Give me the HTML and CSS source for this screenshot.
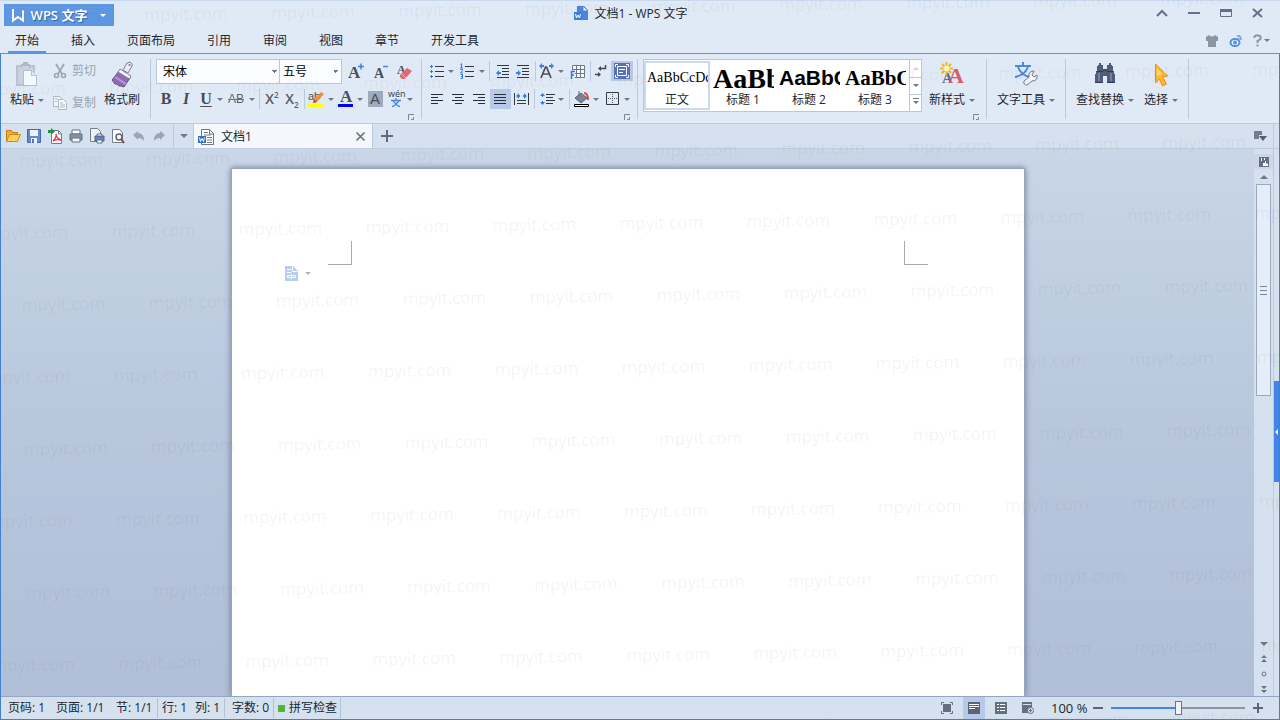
FILE: index.html
```html
<!DOCTYPE html>
<html lang="zh-CN">
<head>
<meta charset="utf-8">
<title>文档1 - WPS 文字</title>
<link rel="stylesheet" href="styles.css">
</head>
<body>
<div class="window">
  <header class="titlebar">
    <div class="title-left">
      <button class="app-button"><svg width="12" height="13" viewBox="0 0 12 13"><path d="M1 0v11.500l5-3.500 5 3.500V1.500" fill="none" stroke="#fff" stroke-width="2"/></svg><span>WPS 文字</span><i class="caret light"></i></button>
    </div>
    <div class="title">
      <svg width="15" height="15" viewBox="0 0 15 15"><path d="M3 0h7l4 4v10H3z" fill="#4a86dc"/><path d="M9 0v5h5z" fill="#fff" stroke="#4a86dc"/><path d="M0 6h8v8H0z" fill="#3f7ed8"/><path d="M1.500 8l1 4 1.500-3 1.500 3 1-4" fill="none" stroke="#fff"/></svg>
      <span>文档1 - WPS 文字</span>
    </div>
    <div class="title-right">
      <button aria-label="折叠功能区"><svg width="14" height="12" viewBox="0 0 14 12"><path d="M2 9l5-5 5 5" fill="none" stroke="#667085" stroke-width="2"/></svg></button>
      <button aria-label="最小化"><svg width="14" height="12" viewBox="0 0 14 12"><path d="M1 6h12" stroke="#667085" stroke-width="2"/></svg></button>
      <button aria-label="最大化"><svg width="14" height="12" viewBox="0 0 14 12"><path d="M1.500 2.500h11v7h-11z" fill="none" stroke="#667085"/><path d="M1 2h12v3H1z" fill="#667085"/></svg></button>
      <button aria-label="关闭"><svg width="14" height="12" viewBox="0 0 14 12"><path d="M2 2l9 8M11 2l-9 8" stroke="#667085" stroke-width="2"/></svg></button>
    </div>
  </header>
  <nav class="tabs">
    <button class="active">开始</button><button>插入</button><button>页面布局</button><button>引用</button><button>审阅</button><button>视图</button><button>章节</button><button>开发工具</button>
    <div class="tab-tools">
      <button aria-label="皮肤"><svg width="14" height="14" viewBox="0 0 14 14"><path d="M4 1q3 3 6 0l3 2v4h-2v6H3V7H1V3z" fill="#8a94a5"/></svg></button>
      <button aria-label="微博"><svg width="14" height="14" viewBox="0 0 14 14"><ellipse cx="6" cy="8.500" rx="4.500" ry="3.500" fill="#fff" stroke="#4f8fe0" stroke-width="2"/><circle cx="6" cy="8.500" r="2" fill="#4f8fe0"/><path d="M8 2q4-1 4 4M9 4q1 0 1 2" fill="none" stroke="#6aa2e8" stroke-width="1.500"/></svg></button>
      <button class="help" aria-label="帮助"><svg width="9" height="13" viewBox="0 0 9 13"><path d="M1.500 4V2.500l1.500-1h3l1.500 1V5l-3 2v2M4.500 10.500v2" fill="none" stroke="#8a94a5" stroke-width="2"/></svg><i class="caret"></i></button>
    </div>
  </nav>
  <div class="frame">
    <section class="ribbon">
      <div class="group clipboard">
        <button class="big paste"><svg width="24" height="26" viewBox="0 0 24 26"><path d="M1 3h19v21H1z" fill="#b9c3cf"/><path d="M3 5h15v17H3z" fill="#c9d3df"/><path d="M6 2h2V0h5v2h2v4H6z" fill="#aeb9c7"/><path d="M7 5h7" stroke="#e8eef5"/><path d="M8.500 8.500h8l5 5v10h-13z" fill="#f3f8fd" stroke="#b5c1cf"/><path d="M16.500 8.500v5h5" fill="#dfe9f3" stroke="#b5c1cf"/></svg><span>粘贴<i class="caret"></i></span></button>
        <div class="stack">
          <button class="muted"><svg width="14" height="16" viewBox="0 0 14 16"><path d="M3 1l6 10M11 1L5 11" stroke="#9ba5b1" stroke-width="1.700"/><circle cx="3.500" cy="12.500" r="2" fill="none" stroke="#9ba5b1" stroke-width="1.600"/><circle cx="10.500" cy="12.500" r="2" fill="none" stroke="#9ba5b1" stroke-width="1.600"/></svg><span>剪切</span></button>
          <button class="muted"><svg width="14" height="16" viewBox="0 0 14 16"><path d="M.500 1.500h6l2 2v8h-8z" fill="#f0f5fb" stroke="#aeb8c4"/><path d="M5.500 4.500h5l3 3v7h-8z" fill="#f5f9fd" stroke="#aeb8c4"/><path d="M2 4h3M2 6.500h2M7 8h3M7 10h5M7 12h5" stroke="#aeb8c4"/></svg><span>复制</span></button>
        </div>
        <button class="big brush"><svg width="24" height="26" viewBox="0 0 24 26"><path d="M9 9l11 7-6 9-3-1-2 0-2-2-2 0-3-4z" fill="#8f6bb6" stroke="#65508b"/><path d="M5 15l11 7" stroke="#b79bd2" stroke-width="2"/><path d="M10 7l11 7-1.500 3L8 10z" fill="#f6f3fb" stroke="#877aa5"/><path d="M13 8l4-7 3-1 2 2 0 2-4 7z" fill="#eeeaf5" stroke="#837b9a"/><circle cx="19.500" cy="3" r="1" fill="#756b91"/></svg><span>格式刷</span></button>
      </div>

      <div class="group font">
        <div class="row font-choice">
          <select class="font-name" aria-label="字体"><option>宋体</option></select><select class="font-size" aria-label="字号"><option>五号</option></select>
          <button aria-label="增大字号"><svg width="18" height="18" viewBox="0 0 18 18"><text x="1" y="15" class="glyph-a">A</text><path d="M11 3.500h6M14 .500v6" stroke="#3f82df" stroke-width="1.500"/></svg></button>
          <button aria-label="减小字号"><svg width="18" height="18" viewBox="0 0 18 18"><text x="2" y="15" class="glyph-small">A</text><path d="M11 3.500h5" stroke="#3f82df" stroke-width="1.500"/></svg></button>
          <button aria-label="清除格式"><svg width="16" height="18" viewBox="0 0 16 18"><text x="0" y="11" class="glyph-tiny">A</text><path d="M3 12l7-7 5 3-7 8H5l-2-2z" fill="#df6973"/><path d="M5 11l4 4" stroke="#f6b7bd"/></svg></button>
        </div>
        <div class="row format">
          <button class="serif"><b>B</b></button><button class="serif"><b><i>I</i></b></button><button class="serif underlined"><b>U</b></button><i class="caret"></i>
          <button class="strike">AB</button><i class="caret"></i><i class="sep"></i>
          <button class="script" aria-label="上标"><span>X<sup>2</sup></span></button><button class="script" aria-label="下标"><span>X<sub>2</sub></span></button><i class="sep"></i>
          <button aria-label="突出显示"><svg width="16" height="16" viewBox="0 0 16 16"><text x="0" y="9" class="glyph-ab">ab</text><path d="M5 12l1-4 7-7 3 2-7 8z" fill="#ed9132"/><path d="M5 12l1-4 3 3z" fill="#cf423f"/><path d="M0 13h15v3H0z" fill="#ff0"/></svg></button><i class="caret"></i>
          <button aria-label="字体颜色"><svg width="16" height="16" viewBox="0 0 16 16"><text x="2" y="11" class="glyph-a">A</text><path d="M0 13h15v3H0z" fill="#00f"/></svg></button><i class="caret"></i>
          <button class="shade">A</button>
          <button aria-label="拼音指南"><svg width="16" height="18" viewBox="0 0 16 18"><text x="0" y="7" class="pinyin">wén</text><path d="M3 10.500h10M8 8v2M5 11l5 5 2 .500M11 11l-5 5-2 .500" fill="none" stroke="#4386dc" stroke-width="1.300"/></svg></button><i class="caret"></i>
        </div>
        <button class="launcher" aria-label="字体设置"><svg width="6" height="6" viewBox="0 0 6 6"><path d="M.500 6V.500H6M3 5.500h2.500V3" fill="none" stroke="#7c8797"/></svg></button>
      </div>

      <div class="group paragraph">
        <div class="row para-top">
          <button aria-label="项目符号"><svg width="15" height="15" viewBox="0 0 15 15"><path d="M5 2.500h9M5 7.500h9M5 12.500h9" stroke="#33383f"/><path d="M0 2.500h3M1.500 1v3M0 7.500h3M1.500 6v3M0 12.500h3M1.500 11v3" stroke="#3478df"/></svg></button><i class="caret"></i>
          <button aria-label="编号"><svg width="15" height="17" viewBox="0 0 15 17"><path d="M5 3.500h9M5 8.500h9M5 13.500h9" stroke="#33383f"/><path d="M.500 1.500l1-1V5M0 5h3M.500 6.500h2v1l-2 2.500H3M.500 11.500h2v4h-2M1 13.500h1.500" fill="none" stroke="#3478df"/></svg></button><i class="caret"></i><i class="sep"></i>
          <button aria-label="减少缩进"><svg width="14" height="14" viewBox="0 0 14 14"><path d="M1 1.500h12M6 4.500h7M6 7.500h7M6 10.500h7M1 13.500h12" stroke="#33383f"/><path d="M0 9l3-3v2h2v2H3v2z" fill="#3d80df"/></svg></button><button aria-label="增加缩进"><svg width="14" height="14" viewBox="0 0 14 14"><path d="M1 1.500h12M6 4.500h7M6 7.500h7M6 10.500h7M1 13.500h12" stroke="#33383f"/><path d="M5 9L2 6v2H0v2h2v2z" fill="#3d80df"/></svg></button><i class="sep"></i>
          <button aria-label="中文版式"><svg width="16" height="16" viewBox="0 0 16 16"><path d="M2 15L6.500 4h1L12 15M4 11h6" fill="none" stroke="#4a4e55" stroke-width="1.700"/><path d="M0 3l3-3v2h2v2H3v2zM15 3l-3-3v2h-2v2h2v2z" fill="#3d80df"/></svg></button><i class="caret"></i>
          <button aria-label="插入表格"><svg width="15" height="15" viewBox="0 0 15 15"><path d="M2.500 1.500h12v12h-12zM2.500 5.500h12M2.500 9.500h12M6.500 1v12M10.500 1v12" fill="#f3f7fc" stroke="#6d7889"/><path d="M0 6h5v9H0z" fill="#e0eaf6"/><path d="M1.500 15V7.500H5M1 11h3" fill="none" stroke="#3478df" stroke-width="1.500"/></svg></button><i class="sep"></i>
          <button aria-label="段落标记"><svg width="12" height="14" viewBox="0 0 12 14"><path d="M10.500 1v3.500H5M0 10.500h5" fill="none" stroke="#454a52" stroke-width="1.500"/><path d="M3 4.500L6 2v5zM6 10.500L3 8v5z" fill="#454a52"/></svg></button>
          <button class="pressed" aria-label="显示段落布局"><svg width="16" height="16" viewBox="0 0 16 16"><path d="M0 0h16v16H0z" fill="#5871b6"/><path d="M3.500 3.500h9v9h-9zM1.500 4V1.500H4M12 1.500h2.500V4M14.500 12v2.500H12M4 14.500H1.500V12M5 6.500h6M5 9.500h4" fill="none" stroke="#fff"/></svg></button>
        </div>
        <div class="row para-bottom">
          <button aria-label="左对齐"><svg width="13" height="12" viewBox="0 0 13 12"><path d="M0 1.500h12M0 4.500h7M0 7.500h12M0 10.500h7" stroke="#282d33"/></svg></button><button aria-label="居中"><svg width="13" height="12" viewBox="0 0 13 12"><path d="M0 1.500h12M3 4.500h7M0 7.500h12M3 10.500h7" stroke="#282d33"/></svg></button><button aria-label="右对齐"><svg width="13" height="12" viewBox="0 0 13 12"><path d="M0 1.500h12M5 4.500h7M0 7.500h12M5 10.500h7" stroke="#282d33"/></svg></button><button class="pressed" aria-label="两端对齐"><svg width="13" height="12" viewBox="0 0 13 12"><path d="M0 1.500h12M0 4.500h12M0 7.500h12M0 10.500h12" stroke="#282d33"/></svg></button>
          <button aria-label="分散对齐"><svg width="15" height="12" viewBox="0 0 15 12"><path d="M.500 0v12M14.500 0v12M3 7.500h9M3 10.500h9" stroke="#33383f"/><path d="M2 3l3-3v2h1v2H5v2zM13 3l-3-3v2H9v2h1v2z" fill="#3d80df"/></svg></button><i class="sep"></i>
          <button aria-label="行距"><svg width="15" height="14" viewBox="0 0 15 14"><path d="M6 2.500h9M6 5.500h7M6 8.500h9M6 11.500h7" stroke="#33383f"/><path d="M2.500 2v3M2.500 9v3" stroke="#3478df"/><path d="M0 4l2.500-3L5 4zM0 10l2.500 3L5 10z" fill="#3478df"/></svg></button><i class="caret"></i><i class="sep"></i>
          <button aria-label="底纹颜色"><svg width="16" height="16" viewBox="0 0 16 16"><path d="M1 7l6-5 6 5-6 5z" fill="#7a8493" stroke="#5a6472"/><path d="M5 0v5" stroke="#5a6472"/><path d="M10 2q4 0 4 7" fill="none" stroke="#db4c48" stroke-width="2"/><path d="M.500 13.500h14v2H.500z" fill="#fff" stroke="#000"/></svg></button><i class="caret"></i>
          <button aria-label="边框"><svg width="14" height="14" viewBox="0 0 14 14"><path d="M1.500 .500h12v12H1.500z" fill="none" stroke="#33383f"/><path d="M7.500 2v10M3 6.500h10" stroke="#505963" stroke-dasharray="1 1"/></svg></button><i class="caret"></i>
        </div>
        <button class="launcher" aria-label="段落设置"><svg width="6" height="6" viewBox="0 0 6 6"><path d="M.500 6V.500H6M3 5.500h2.500V3" fill="none" stroke="#7c8797"/></svg></button>
      </div>

      <div class="group styles">
        <div class="row">
          <div class="gallery">
            <button class="style selected"><span class="sample body">AaBbCcDd</span><span>正文</span></button>
            <button class="style"><span class="sample h1">AaBb</span><span>标题 1</span></button>
            <button class="style"><span class="sample h2">AaBbC</span><span>标题 2</span></button>
            <button class="style"><span class="sample h3">AaBbC</span><span>标题 3</span></button>
            <div class="gallery-scroll"><button aria-label="上一行"><i class="caret up"></i></button><button aria-label="下一行"><i class="caret"></i></button><button aria-label="更多样式"><i class="caret bar"></i></button></div>
          </div>
          <button class="big"><svg width="24" height="26" viewBox="0 0 24 26"><text x="2" y="21" class="style-blue">A</text><text x="8" y="21" class="style-red">A</text><path d="M6.500 0v13M0 6.500h13M2 2l9 9M11 2l-9 9" stroke="#f1b51d" stroke-width="2"/><circle cx="6.500" cy="6.500" r="3" fill="#fff3b0"/></svg><span>新样式<i class="caret"></i></span></button>
        </div>
        <button class="launcher" aria-label="样式设置"><svg width="6" height="6" viewBox="0 0 6 6"><path d="M.500 6V.500H6M3 5.500h2.500V3" fill="none" stroke="#7c8797"/></svg></button>
      </div>

      <div class="group tools">
        <button class="big"><svg width="24" height="26" viewBox="0 0 24 26"><path d="M1 4h16M9 0v4M4 5q3 8 11 10M14 5q-3 8-13 10" fill="none" stroke="#4687e6" stroke-width="2"/><path d="M10 19l5-4q-1-6 5-6l-2 4 2 2 3-2q1 6-5 6l-5 4q-4 0-3-4z" fill="#f3f5f8" stroke="#707987"/></svg><span>文字工具<i class="caret"></i></span></button>
      </div>
      <div class="group find">
        <button class="big"><svg width="24" height="26" viewBox="0 0 24 26"><path d="M5 4V3h1V1h2v2h2v4h4V3h2V1h2v2h1v1h1v5h1v3h1v9h-8v-7h-4v7H2v-9h1V9h1V4z" fill="#4f5d78"/><path d="M4 9.500h6M14 9.500h6M2 20.500h8M14 20.500h8M10 8h4" stroke="#2e3b53"/><path d="M6 11v8M18 11v8" stroke="#73829e" stroke-width="2"/></svg><span>查找替换<i class="caret"></i></span></button>
        <button class="big"><svg width="24" height="26" viewBox="0 0 24 26"><path d="M6.500 2l12 12-5 1 4 7-4 2-3-7-4 4z" fill="#fdbb26" stroke="#e88c1d"/><path d="M8 6v8l5-2z" fill="#ffd793"/></svg><span>选择<i class="caret"></i></span></button>
      </div>
    </section>

    <section class="docbar">
      <div class="quick">
        <button aria-label="打开"><svg width="16" height="16" viewBox="0 0 16 16"><path d="M1.500 13.500v-11h5l1 2h5v3" fill="#f3ae2b" stroke="#c77b16"/><path d="M1.500 13.500l3-7h11l-3 7z" fill="#ffd256" stroke="#d18a19"/></svg></button>
        <button aria-label="保存"><svg width="14" height="14" viewBox="0 0 14 14"><path d="M.500 .500h13v13H.500z" fill="#6688d1" stroke="#4666b4"/><path d="M3 1h8v6H3zM4 9h6v5H4z" fill="#edf3fc"/><path d="M5 10h2v4H5z" fill="#5374bd"/></svg></button>
        <button aria-label="输出为PDF"><svg width="16" height="16" viewBox="0 0 16 16"><path d="M4.500 2.500h7l3 3v10h-10z" fill="#fff" stroke="#737c8b"/><path d="M11.500 3v3h3" fill="none" stroke="#737c8b"/><path d="M6 13q4-4 3-7 0 4 5 6-4-1-8 1z" fill="none" stroke="#d9343b" stroke-width="1.300"/><path d="M1 2h3V0l4 3.500L4 7V5H1z" fill="#24963a"/></svg></button>
        <button aria-label="打印"><svg width="14" height="14" viewBox="0 0 14 14"><path d="M3 1h8v4H3z" fill="#fff" stroke="#697486"/><path d="M1 5h12v6H1z" fill="#8792a4" stroke="#657083"/><path d="M3 9h8v4H3z" fill="#eff4fb" stroke="#697486"/></svg></button>
        <button aria-label="直接打印"><svg width="16" height="16" viewBox="0 0 16 16"><path d="M1.500 .500h7l3 3v10h-10z" fill="#eef2f7" stroke="#737c8b"/><path d="M6 8h9v5H6z" fill="#6682ad" stroke="#4d6588"/><path d="M8 6h5v2H8zM8 12h5v3H8z" fill="#fff" stroke="#5b7191"/></svg></button>
        <button aria-label="打印预览"><svg width="14" height="16" viewBox="0 0 14 16"><path d="M1.500 1.500h7l3 3v10h-10z" fill="#fff" stroke="#737c8b"/><circle cx="8" cy="9" r="3" fill="#eff5fb" stroke="#5e6470" stroke-width="1.500"/><path d="M10 11l3 4" stroke="#754e42" stroke-width="2"/></svg></button>
        <button aria-label="撤销"><svg width="14" height="12" viewBox="0 0 14 12"><path d="M1 5l5-4v2q6 0 6 8-2-3-6-3v2z" fill="#9aa5b5"/></svg></button>
        <button aria-label="恢复"><svg width="14" height="12" viewBox="0 0 14 12"><path d="M12 5L7 1v2q-6 0-6 8 2-3 6-3v2z" fill="#9aa5b5"/></svg></button>
      </div>
      <button class="quick-more" aria-label="自定义快速访问"><i class="caret large"></i></button>
      <div class="doc-tab"><svg width="16" height="16" viewBox="0 0 16 16"><path d="M3.500 .500h8l4 4v11h-12z" fill="#fff" stroke="#6c7688"/><path d="M11.500 1v4h4M6 3.500h4M6 6h7M9 8.500h5M9 11h5M9 13.500h5" fill="none" stroke="#6c7688"/><path d="M0 7h8v7H0z" fill="#376fc3"/><path d="M1.500 8.500l1 4 1.500-3 1.500 3 1-4" fill="none" stroke="#fff"/></svg><span>文档1</span><button aria-label="关闭文档"><svg width="9" height="9" viewBox="0 0 9 9"><path d="M.500 .500l8 8M8.500 .500l-8 8" stroke="#606b7d" stroke-width="1.500"/></svg></button></div>
      <button class="new-tab" aria-label="新建"><svg width="12" height="12" viewBox="0 0 12 12"><path d="M6 0v12M0 6h12" stroke="#606b7d" stroke-width="2"/></svg></button>
      <button class="tab-list" aria-label="文档列表"><svg width="13" height="10" viewBox="0 0 13 10"><path d="M0 0h8v4H5v4H0z" fill="#737d8e"/><path d="M5 5h8l-4 5z" fill="#535e70"/></svg></button>
      <div class="rail-top"></div>
    </section>

    <main class="workspace">
      <div class="canvas">
        <article class="page">
          <div class="marks"><i class="mark-left"></i><i class="mark-right"></i></div>
          <button class="page-options" aria-label="粘贴选项"><svg width="13" height="15" viewBox="0 0 13 15"><path d="M0 0h8l5 5v10H0z" fill="#b9cded"/><path d="M7.500 0v5.500h5M2 3.500h4M2 6.500h4M2.500 9.500h8v2h-8zM6.500 8v5" fill="none" stroke="#fff"/></svg><i class="caret"></i></button>
        </article>
      </div>
      <div class="scrollbar">
        <button class="ruler" aria-label="标尺"><svg width="10" height="10" viewBox="0 0 10 10"><path d="M0 0h10v10H0z" fill="#667082"/><path d="M2.500 1v3M5.500 1v2" stroke="#fff"/><path d="M4 9V6h2V4h1v2l2 1v2z" fill="#fff"/></svg></button>
        <button aria-label="向上滚动"><i class="caret large up"></i></button>
        <div class="track"><div class="thumb"><i></i><i></i><i></i></div></div>
        <button aria-label="向下滚动"><i class="caret large"></i></button>
        <button aria-label="上一页"><svg width="6" height="8" viewBox="0 0 6 8"><path d="M0 3l3-3 3 3zM0 7l3-3 3 3z" fill="#697487"/></svg></button>
        <button aria-label="选择浏览对象"><svg width="6" height="6" viewBox="0 0 6 6"><circle cx="3" cy="3" r="2" fill="none" stroke="#697487"/></svg></button>
        <button aria-label="下一页"><svg width="6" height="8" viewBox="0 0 6 8"><path d="M0 1l3 3 3-3zM0 5l3 3 3-3z" fill="#697487"/></svg></button>
      </div>
      <div class="rail"><button aria-label="展开任务窗格"></button></div>
    </main>

    <footer class="status">
      <span class="page-no">页码: 1</span><span class="page-count">页面: 1/1</span><span class="section">节: 1/1</span><span class="line">行: 1</span><span class="column">列: 1</span><span class="words">字数: 0</span><button class="spell"><i></i>拼写检查</button>
      <div class="views">
        <button aria-label="全屏"><svg width="12" height="12" viewBox="0 0 12 12"><path d="M.500 3V.500H3M9 .500h2.500V3M11.500 9v2.500H9M3 11.500H.500V9" fill="none" stroke="#646f80"/><path d="M2 2h8v8H2z" fill="#646f80"/></svg></button>
        <button class="pressed" aria-label="页面视图"><svg width="12" height="12" viewBox="0 0 12 12"><path d="M0 0h12v12H0z" fill="#596476"/><path d="M1 2.500h10M1 4.500h10M1 6.500h6" stroke="#fff"/></svg></button>
        <button aria-label="大纲视图"><svg width="12" height="12" viewBox="0 0 12 12"><path d="M0 0h12v12H0z" fill="#646f80"/><path d="M2 2.500h2M5 2.500h5M2 5.500h2M5 5.500h5M2 8.500h2M5 8.500h5" stroke="#fff"/></svg></button>
        <button aria-label="网页视图"><svg width="12" height="12" viewBox="0 0 12 12"><path d="M0 0h10v5L6 11H0z" fill="#646f80"/><path d="M1 2.500h8" stroke="#d5e1ef"/><circle cx="8.500" cy="8.500" r="3" fill="#d5e1ef" stroke="#646f80"/><path d="M7 8.500h3M8.500 7v3" stroke="#646f80"/></svg></button>
      </div>
      <span class="percent">100 %</span>
      <button class="zoom-button" aria-label="缩小"><svg width="10" height="10" viewBox="0 0 10 10"><path d="M0 5h10" stroke="#596476" stroke-width="2"/></svg></button>
      <input class="zoom" type="range" min="0" max="100" value="50" aria-label="显示比例">
      <button class="zoom-button" aria-label="放大"><svg width="10" height="10" viewBox="0 0 10 10"><path d="M0 5h10M5 0v10" stroke="#596476" stroke-width="2"/></svg></button>
    </footer>
  </div>
  <div class="watermark" aria-hidden="true"></div>
</div>
<script src="watermark.js"></script>
</body>
</html>
```
FILE: styles.css
```css
* { box-sizing: border-box; }
body { margin: 0; font: 12px/16px "Open Sans", "Noto Sans CJK SC", sans-serif; color: #20262e; }
button { font: inherit; color: inherit; background: none; border: 0; padding: 0; margin: 0; display: flex; align-items: center; justify-content: center; white-space: nowrap; }
svg { display: block; flex: none; overflow: visible; }
.window { position: relative; display: flex; flex-direction: column; height: 100vh; overflow: hidden; background: #e0eaf6; }
.caret { display: inline-block; flex: none; width: 0; height: 0; border: 3px solid transparent; border-top-color: #6d788b; border-bottom: 0; place-self: center; }
.caret.light { border-top-color: #fff; }
.caret.large { border-width: 4px 4px 0; }
.caret.up { border-top: 0; border-bottom: 3px solid #6d788b; }
.caret.large.up { border-bottom-width: 4px; }
.pressed { background: #b7c8e8; }

.titlebar { display: grid; grid-template-columns: 1fr auto 1fr; height: 28px; flex: none; border-top: 1px solid #c8d9ef; padding: 0 15px 0 4px; }
.title-left { padding-top: 3px; }
.app-button { width: 110px; height: 22px; gap: 7px; background: #5e97e1; color: #fff; font-size: 13px; font-weight: 600; text-shadow: 1px 1px 1px #3767a5; }
.app-button .caret { margin-left: 6px; }
.title { display: flex; align-items: center; gap: 6px; margin-right: 8px; padding-bottom: 2px; }
.title-right { display: flex; justify-content: flex-end; align-items: center; gap: 18px; padding-bottom: 3px; }
.title-right button { width: 14px; }

.tabs { display: flex; flex: none; height: 26px; padding-left: 8px; border-bottom: 1px solid #5596e4; }
.tabs > button { padding: 2px 7px 0; margin-right: 18px; border-bottom: 2px solid transparent; }
.tabs > .active { border-bottom-color: #5596e4; }
.tab-tools { display: flex; align-items: center; gap: 10px; margin-left: auto; padding-right: 10px; }
.help { gap: 2px; }

.frame { display: flex; flex-direction: column; flex: 1; min-height: 0; border: 1px solid #4380cb; border-top: 0; }
.ribbon { display: flex; flex: none; height: 70px; border-bottom: 1px solid #b9c9df; }
.group { position: relative; flex: none; padding: 5px 5px 4px; }
.group::after { content: ""; position: absolute; right: 0; top: 5px; bottom: 4px; width: 1px; background: #b9c9df; }
.clipboard { display: flex; width: 150px; padding: 5px 0 4px 5px; }
.big { flex-direction: column; justify-content: flex-start; align-items: center; gap: 4px; padding-top: 3px; height: 52px; }
.big > span { display: flex; align-items: center; gap: 4px; height: 16px; }
.paste { width: 42px; }
.stack { display: grid; gap: 4px; width: 54px; padding-left: 5px; }
.stack button { height: 24px; gap: 5px; justify-content: flex-start; }
.muted { color: #9aa3af; }
.brush { width: 40px; }
.row { display: grid; height: 24px; margin-bottom: 4px; align-items: center; }
.row > button { height: 20px; }
.font { width: 271px; }
.font-choice { grid-template-columns: 124px 62px 28px 22px 26px; }
.font-choice select { appearance: none; height: 25px; width: 100%; border: 1px solid #b6c7df; border-radius: 0; padding: 0 6px; font: inherit; color: #000; background-color: #fafcff; background-image: linear-gradient(to top right, transparent 50%, #6d788b 50%), linear-gradient(to top left, transparent 50%, #6d788b 50%); background-size: 3px 3px; background-repeat: no-repeat; background-position: right 5px center, right 2px center; }
.font-choice .font-size { padding-left: 3px; border-left-width: 0; }
.format { grid-template-columns: 20px 20px 20px 8px 24px 8px 6px 20px 20px 4px 20px 10px 20px 8px 22px 20px 8px; margin-bottom: 3px; }
.para-top { grid-template-columns: 20px 8px 24px 6px 8px 20px 20px 4px 20px 8px 24px 2px 20px 22px; }
.para-bottom { grid-template-columns: repeat(5, 21px) 5px 20px 8px 8px 18px 10px 22px 8px; margin-bottom: 3px; }
.paragraph { width: 216px; }
.sep { width: 1px; height: 20px; background: #b9c9df; justify-self: center; }
.serif { font: 16px/20px "Liberation Serif", serif; color: #474b52; }
.underlined { text-decoration: underline; text-underline-offset: 2px; }
.strike { font: 12px/20px "Liberation Sans", sans-serif; color: #5a5f67; text-decoration: line-through #d5504e; }
.script { font: 600 14px/16px "Open Sans", sans-serif; color: #585d65; }
.script sup, .script sub { font-size: 8px; line-height: 0; }
.shade { font: 15px/16px "Liberation Sans", sans-serif; color: #474b52; background: #9eabbe; width: 15px; justify-self: center; }
.row > .shade { height: 16px; }
.glyph-a { font: bold 17px "Liberation Serif", serif; fill: #4a4f57; }
.glyph-small { font: bold 14px "Liberation Serif", serif; fill: #4a4f57; }
.glyph-tiny { font: bold 12px "Liberation Serif", serif; fill: #4a4f57; }
.glyph-ab { font: 11px "Liberation Sans", sans-serif; fill: #4a4f57; }
.pinyin { font: 9px "Open Sans", sans-serif; fill: #343a42; }
.style-blue { font: bold 15px "Liberation Serif", serif; fill: #51709f; }
.style-red { font: bold 22px "Liberation Serif", serif; fill: #dc5a68; }
.launcher { width: 6px; height: 6px; margin-left: auto; margin-right: 3px; }

.styles { width: 349px; }
.styles .row { display: flex; height: 52px; gap: 7px; margin-bottom: 3px; }
.styles .big { height: 52px; }
.gallery { display: flex; width: 279px; height: 53px; border: 1px solid #b6c7df; background: #fff; }
.style { flex-direction: column; justify-content: flex-end; align-items: stretch; width: 66px; height: 49px; margin-top: 1px; border: 2px solid transparent; overflow: hidden; }
.style.selected { border-color: #cbd9f3; }
.sample { height: 28px; padding-left: 1px; text-align: left; overflow: hidden; color: #000; }
.sample.body { font: 14px/28px "Liberation Serif", serif; }
.sample.h1 { font: bold 28px/30px "Liberation Serif", serif; }
.sample.h2 { font: bold 21px/28px "Liberation Sans", sans-serif; }
.sample.h3 { font: bold 21px/28px "Liberation Serif", serif; }
.gallery-scroll { display: grid; grid-template-rows: repeat(3, 1fr); flex: 1; margin-left: 1px; border-left: 1px solid #b6c7df; }
.gallery-scroll button + button { border-top: 1px solid #b6c7df; }
.gallery-scroll .caret.up { border-bottom-color: #ccd1d8; }
.caret.bar { position: relative; }
.caret.bar::before { content: ""; position: absolute; left: -3px; top: -6px; width: 6px; height: 1px; background: #6d788b; }
.tools { width: 79px; padding-left: 10px; }
.find { display: flex; gap: 10px; width: 123px; padding-left: 10px; }

.docbar { display: flex; flex: none; height: 25px; align-items: stretch; background: #d5e1ef; border-bottom: 1px solid #bdcbe0; }
.quick { display: grid; grid-template-columns: repeat(8, 21px); padding: 0 3px 0 1px; border-right: 1px solid #b9c9df; }
.quick-more { width: 19px; }
.doc-tab { display: flex; align-items: center; gap: 7px; width: 180px; padding: 1px 7px 0 4px; background: #f4f8fc; border: solid #bdcbe0; border-width: 0 1px; }
.doc-tab button { margin-left: auto; }
.new-tab { width: 28px; }
.tab-list { margin-left: auto; width: 26px; }
.rail-top { width: 6px; border-left: 1px solid #b9c9df; }

.workspace { display: flex; flex: 1; min-height: 0; }
.canvas { flex: 1; display: flex; justify-content: center; overflow: hidden; padding-top: 19px; background: linear-gradient(#c9d6e8, #b8c7dc 50%, #b0bfd7); }
.page { width: 794px; border: 1px solid #98a5bb; border-bottom: 0; background: #fff; box-shadow: 0 0 6px #69778f; padding: 72px 96px 0; }
.marks { display: flex; justify-content: space-between; }
.marks i { width: 24px; height: 24px; border: 0 solid #a9a9a9; border-bottom-width: 1px; }
.marks .mark-left { border-right-width: 1px; }
.marks .mark-right { border-left-width: 1px; }
.page-options { gap: 7px; margin: 1px 0 0 -43px; }
.page-options .caret { border-top-color: #a9b6c9; }
.scrollbar { display: flex; flex-direction: column; width: 19px; background: #d5e1ef; padding-top: 5px; }
.scrollbar button { height: 15px; flex: none; }
.scrollbar .ruler { background: #cbd7e8; }
.track { flex: 1; padding: 0 2px; }
.thumb { display: flex; flex-direction: column; gap: 3px; align-items: center; justify-content: center; height: 47%; border: 1px solid #9ba9bf; background: #e5edf8; }
.thumb i { width: 7px; height: 1px; background: #7b8799; }
.rail { display: flex; align-items: center; width: 6px; background: #d5e1ef; border-left: 1px solid #b9c9df; }
.rail button { width: 6px; height: 101px; margin-top: 18px; background: #4385e7; }
.rail button::before { content: ""; border: 3px solid transparent; border-right-color: #fff; border-left: 0; }

.status { display: flex; align-items: center; flex: none; height: 23px; padding: 0 14px 0 7px; background: #d5e1ef; border-top: 1px solid #93a7c3; }
.status > span, .spell { flex: none; height: 20px; line-height: 20px; }
.page-no { width: 48px; }
.page-count { width: 60px; }
.section { width: 42px; border-right: 1px solid #b2c1d4; }
.line { width: 37px; padding-left: 4px; }
.column { width: 30px; border-right: 1px solid #b2c1d4; }
.words { width: 49px; padding-left: 7px; border-right: 1px solid #b2c1d4; }
.spell { gap: 4px; padding: 0 3px 0 4px; border-right: 1px solid #b2c1d4; }
.spell i { width: 7px; height: 7px; background: #55b435; }
.views { display: flex; align-self: stretch; gap: 5px; margin-left: auto; padding-right: 12px; }
.views button { width: 22px; }
.percent { width: 40px; font-size: 13px; }
.zoom-button { width: 14px; }
.zoom { appearance: none; width: 134px; height: 16px; margin: 0 6px; background: transparent; }
.zoom::-webkit-slider-runnable-track { height: 2px; background: linear-gradient(90deg, #4385e7 50%, #8d95a2 50%); }
.zoom::-webkit-slider-thumb { appearance: none; width: 7px; height: 14px; margin-top: -6px; border: 1px solid #697487; background: #f1f3f6; }

.watermark { position: absolute; left: 0; top: 5px; transform: rotate(-0.9deg); transform-origin: 0 0; pointer-events: none; font: 17px/24px "Open Sans", sans-serif; color: rgba(70, 75, 85, 0.07); }
.watermark div { display: flex; height: 72px; margin-left: -110px; }
.watermark div:nth-child(even) { margin-left: -146px; }
.watermark span { flex: none; width: 127px; }
```
FILE: watermark.js
```js
const layer = document.querySelector(".watermark");
for (let row = 0; row < 11; row++) {
  const line = document.createElement("div");
  for (let column = 0; column < 12; column++) {
    const mark = document.createElement("span");
    mark.textContent = "mpyit.com";
    line.append(mark);
  }
  layer.append(line);
}
```
